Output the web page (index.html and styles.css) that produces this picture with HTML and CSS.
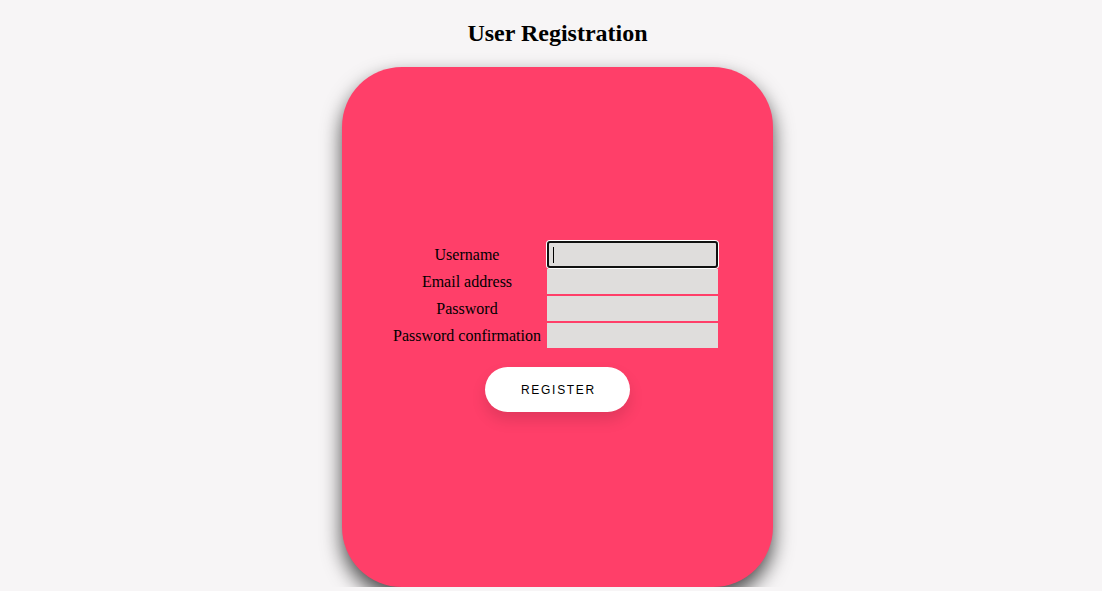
FILE: index.html
```html
<!DOCTYPE html>
<html>
<head>
<meta charset="utf-8">
<link rel="stylesheet" href="styles.css">
</head>
<body>
<div class="page">
  <h2 class="title">User Registration</h2>
  <div class="card">
    <form class="form">
      <div class="fields">
        <label class="label" for="u">Username</label>
        <div class="focus-wrap"><input class="input focused" id="u" type="text"><span class="caret"></span></div>
        <label class="label" for="e">Email address</label>
        <input class="input" id="e" type="text">
        <label class="label" for="p">Password</label>
        <input class="input" id="p" type="password">
        <label class="label" for="pc">Password confirmation</label>
        <input class="input" id="pc" type="password">
      </div>
      <button class="btn" type="button">REGISTER</button>
    </form>
  </div>
</div>
</body>
</html>
```
FILE: styles.css
```css
html, body {
  margin: 0;
  padding: 0;
  background: #f7f5f6;
}
.page {
  padding-left: 13px;
  display: flex;
  flex-direction: column;
  align-items: center;
  font-family: "Liberation Serif", "Times New Roman", serif;
  color: #000;
}
.title {
  margin: 19px 0 20px;
  font-size: 24px;
  line-height: 28px;
  font-weight: bold;
}
.card {
  width: 431px;
  height: 520px;
  background: #ff3f69;
  border-radius: 60px;
  box-shadow: 0 10px 20px rgba(0, 0, 0, 0.7);
  display: flex;
  align-items: center;
  justify-content: center;
}
.form {
  display: flex;
  flex-direction: column;
  align-items: center;
  margin-top: 0;
}
.fields {
  display: grid;
  grid-template-columns: auto 171px;
  column-gap: 6px;
  row-gap: 2px;
  align-items: center;
  margin-left: -4px;
}
.label {
  font-size: 16px;
  text-align: center;
  line-height: 25px;
}
.input {
  box-sizing: border-box;
  width: 171px;
  height: 25px;
  border: none;
  margin: 0;
  padding: 0 4px;
  background: #dfdddc;
  font-family: "Liberation Sans", Arial, sans-serif;
  font-size: 13px;
  outline: none;
  display: block;
}
.focus-wrap {
  position: relative;
}
.input.focused {
  height: 27px;
  margin: -1px 0;
  border: 2px solid #111;
  border-radius: 3px;
  box-shadow: 0 0 0 1px #fff;
}
.caret {
  position: absolute;
  left: 6px;
  top: 5px;
  width: 1px;
  height: 16px;
  background: #000;
}
.btn {
  margin-top: 19px;
  width: 145px;
  height: 45px;
  border: none;
  border-radius: 22.5px;
  background: #fff;
  color: #000;
  font-family: "Liberation Sans", Arial, sans-serif;
  font-size: 12px;
  letter-spacing: 1.7px;
  padding: 1px 0 0 2px;
  box-shadow: 0 8px 15px rgba(0, 0, 0, 0.12);
  cursor: pointer;
}
```
